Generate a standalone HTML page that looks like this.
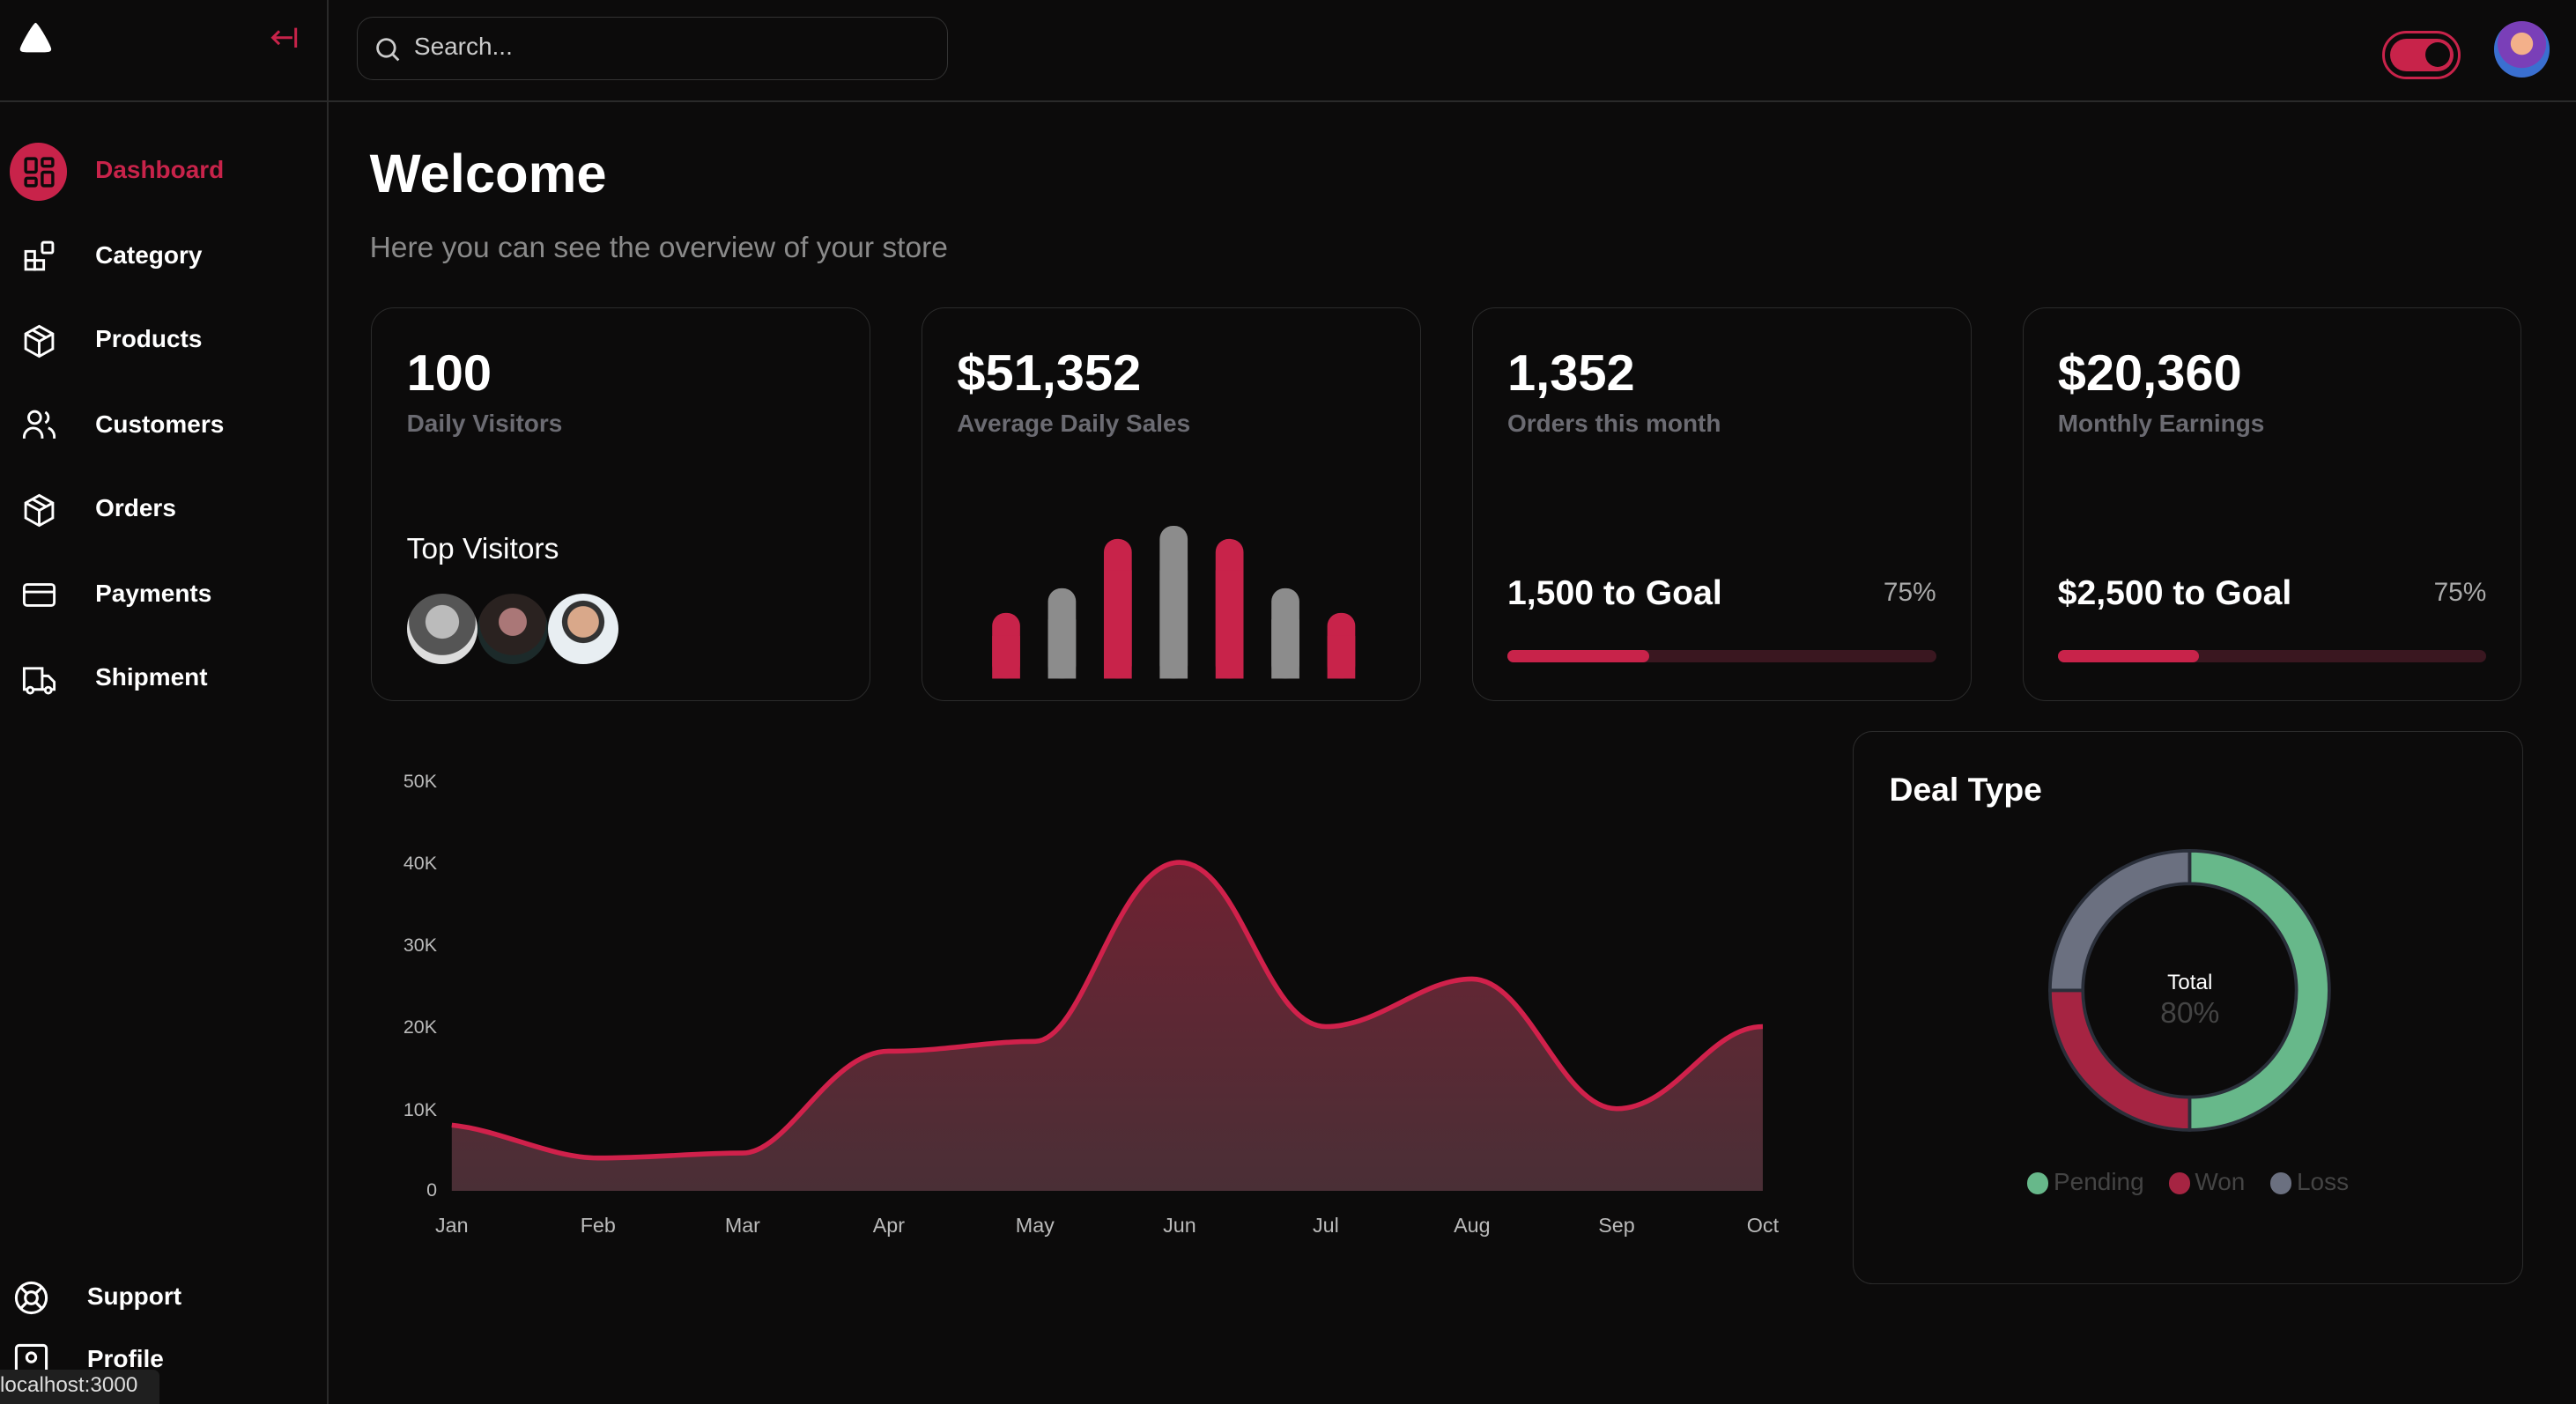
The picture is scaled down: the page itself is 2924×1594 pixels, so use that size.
<!DOCTYPE html>
<html><head><meta charset="utf-8"><style>
*{margin:0;padding:0;box-sizing:border-box}
html,body{background:#0c0b0b;overflow:hidden}
body{width:1568px;height:855px;zoom:1.86480;position:relative;font-family:"Liberation Sans",sans-serif;color:#fff}
.abs{position:absolute}
.nav{position:absolute;left:58px;font-weight:bold;font-size:15px;color:#fff}
.ico{position:absolute;left:13px;width:22px;height:22px}
.card{position:absolute;top:187px;width:304px;height:240px;border:1px solid #2b2b2b;border-radius:14px}
.big{position:absolute;left:21px;top:22px;font-size:31px;font-weight:bold}
.sub{position:absolute;left:21px;top:62px;font-size:15px;font-weight:bold;color:#6b6b72}
.goal{position:absolute;left:21px;top:162px;font-size:21px;font-weight:bold}
.pct{position:absolute;right:21px;top:164px;font-size:16px;color:#aaa}
.bar{position:absolute;left:21px;right:21px;top:208px;height:8px;border-radius:4px;background:#3a1720}
.bar i{display:block;width:33%;height:100%;background:#c8234a;border-radius:4px}
.yl{position:absolute;left:240px;width:26px;text-align:right;font-size:11.5px;color:#bbb}
.xl{position:absolute;top:739px;font-size:12.5px;color:#bbb;transform:translateX(-50%)}
</style></head><body>
<!-- sidebar -->
<div class="abs" style="left:199px;top:0;width:1px;height:855px;background:#2a2a2a"></div>
<div class="abs" style="left:0;top:61px;width:1568px;height:1px;background:#2a2a2a"></div>
<svg class="abs" style="left:10px;top:13px" width="23" height="20" viewBox="0 0 23 20"><path d="M11.5 1 C13 1 21 15 21 17 C21 19 19 19 11.5 19 C4 19 2 19 2 17 C2 15 10 1 11.5 1Z" fill="#fff"/></svg>
<svg class="abs" style="left:163px;top:14px" width="20" height="18" viewBox="0 0 20 18" fill="none" stroke="#c8234a" stroke-width="1.6"><path d="M15 9H3M7 5L3 9L7 13M17 3V15"/></svg>
<div class="abs" style="left:6px;top:87px;width:35px;height:35px;border-radius:50%;background:#c8234a"></div>
<svg class="ico" style="left:13px;top:94px" viewBox="0 0 24 24" fill="none" stroke="#0c0b0b" stroke-width="2"><rect x="3" y="3" width="7" height="9" rx="1"/><rect x="14" y="3" width="7" height="5" rx="1"/><rect x="14" y="12" width="7" height="9" rx="1"/><rect x="3" y="16" width="7" height="5" rx="1"/></svg>
<div class="nav" style="top:95px;color:#c8234a">Dashboard</div>
<svg class="ico" style="top:145px" viewBox="0 0 24 24" fill="none" stroke="#fff" stroke-width="1.7"><rect x="3" y="9" width="6" height="6"/><rect x="3" y="15" width="6" height="6"/><rect x="9" y="15" width="6" height="6"/><rect x="14" y="3" width="7" height="7" rx="1"/></svg>
<div class="nav" style="top:147px">Category</div>
<svg class="ico" style="top:197px" viewBox="0 0 24 24" fill="none" stroke="#fff" stroke-width="1.7"><path d="M12 2L21 7V17L12 22L3 17V7Z M3 7L12 12L21 7M12 12V22M7.5 4.5L16.5 9.5"/></svg>
<div class="nav" style="top:198px">Products</div>
<svg class="ico" style="top:248px" viewBox="0 0 24 24" fill="none" stroke="#fff" stroke-width="1.7"><circle cx="9" cy="7" r="4"/><path d="M2 21v-1a6 6 0 0 1 12 0v1M16 3.5a4 4 0 0 1 0 7M18 14a6 6 0 0 1 4 6v1"/></svg>
<div class="nav" style="top:250px">Customers</div>
<svg class="ico" style="top:300px" viewBox="0 0 24 24" fill="none" stroke="#fff" stroke-width="1.7"><path d="M12 2L21 7V17L12 22L3 17V7Z M3 7L12 12L21 7M12 12V22M7.5 4.5L16.5 9.5"/></svg>
<div class="nav" style="top:301px">Orders</div>
<svg class="ico" style="top:351px" viewBox="0 0 24 24" fill="none" stroke="#fff" stroke-width="1.7"><rect x="2" y="5" width="20" height="14" rx="2"/><path d="M2 10H22"/></svg>
<div class="nav" style="top:353px">Payments</div>
<svg class="ico" style="top:403px" viewBox="0 0 24 24" fill="none" stroke="#fff" stroke-width="1.7"><path d="M2 4H14V18H2Z M14 9H18L22 13V18H14"/><circle cx="6" cy="18.5" r="2" fill="#0c0b0b"/><circle cx="18" cy="18.5" r="2" fill="#0c0b0b"/></svg>
<div class="nav" style="top:404px">Shipment</div>
<svg class="ico" style="left:8px;top:779px" viewBox="0 0 24 24" fill="none" stroke="#fff" stroke-width="1.8"><circle cx="12" cy="12" r="10"/><circle cx="12" cy="12" r="4"/><path d="M5 5L9 9M15 15L19 19M19 5L15 9M9 15L5 19"/></svg>
<div class="nav" style="left:53px;top:781px">Support</div>
<svg class="ico" style="left:8px;top:817px" viewBox="0 0 24 24" fill="none" stroke="#fff" stroke-width="1.8"><rect x="2" y="2" width="20" height="20" rx="2"/><circle cx="12" cy="10" r="3"/></svg>
<div class="nav" style="left:53px;top:819px">Profile</div>
<div class="abs" style="left:0;top:834px;width:97px;height:21px;background:#1f1f1f;border-top-right-radius:4px;font-size:13px;color:#ddd;padding:2px 0 0 0">localhost:3000</div>
<!-- top bar -->
<div class="abs" style="left:217px;top:10px;width:360px;height:39px;border:1px solid #333;border-radius:10px"></div>
<svg class="abs" style="left:227px;top:21px" width="18" height="18" viewBox="0 0 24 24" fill="none" stroke="#ccc" stroke-width="2"><circle cx="11" cy="11" r="7"/><path d="M16 16L21 21"/></svg>
<div class="abs" style="left:252px;top:20px;font-size:15px;color:#ccc">Search...</div>
<div class="abs" style="left:1450px;top:19px;width:48px;height:29px;border:2px solid #c8234a;border-radius:15px;padding:3px"><div style="width:100%;height:100%;background:#c8234a;border-radius:12px;position:relative"><div style="position:absolute;right:2px;top:2px;width:15px;height:15px;border-radius:50%;background:#0c0b0b"></div></div></div>
<div class="abs" style="left:1518px;top:13px;width:34px;height:34px;border-radius:50%;background:radial-gradient(circle at 50% 40%,#f3b08a 0 25%,#7a3fb8 26% 55%,#3a6fd0 56%)"></div>
<!-- header -->
<div class="abs" style="left:225px;top:87px;font-size:33px;font-weight:bold">Welcome</div>
<div class="abs" style="left:225px;top:141px;font-size:18px;color:#8a8a8a">Here you can see the overview of your store</div>
<!-- cards -->
<div class="card" style="left:226px"><div class="big">100</div><div class="sub">Daily Visitors</div>
<div class="abs" style="left:21px;top:137px;font-size:18px">Top Visitors</div>
<div class="abs" style="left:21px;top:174px;width:43px;height:43px;border-radius:50%;background:radial-gradient(circle at 50% 40%,#bbb 0 30%,#555 31% 60%,#ddd 61%)"></div>
<div class="abs" style="left:64px;top:174px;width:43px;height:43px;border-radius:50%;background:radial-gradient(circle at 50% 40%,#a77 0 25%,#2a2220 26% 60%,#1c2a2a 61%)"></div>
<div class="abs" style="left:107px;top:174px;width:43px;height:43px;border-radius:50%;background:radial-gradient(circle at 50% 40%,#d9a88a 0 28%,#333 29% 38%,#e8eef2 39%)"></div>
</div>
<div class="card" style="left:561px"><div class="big">$51,352</div><div class="sub">Average Daily Sales</div></div>
<svg class="abs" style="left:561px;top:187px" width="304" height="240">
<g><rect x="43" y="186" width="17" height="40" rx="8" fill="#c8234a"/><rect x="43" y="200" width="17" height="26" fill="#c8234a"/>
<rect x="77" y="171" width="17" height="55" rx="8" fill="#8c8c8c"/><rect x="77" y="190" width="17" height="36" fill="#8c8c8c"/>
<rect x="111" y="141" width="17" height="85" rx="8" fill="#c8234a"/><rect x="111" y="160" width="17" height="66" fill="#c8234a"/>
<rect x="145" y="133" width="17" height="93" rx="8" fill="#8c8c8c"/><rect x="145" y="160" width="17" height="66" fill="#8c8c8c"/>
<rect x="179" y="141" width="17" height="85" rx="8" fill="#c8234a"/><rect x="179" y="160" width="17" height="66" fill="#c8234a"/>
<rect x="213" y="171" width="17" height="55" rx="8" fill="#8c8c8c"/><rect x="213" y="190" width="17" height="36" fill="#8c8c8c"/>
<rect x="247" y="186" width="17" height="40" rx="8" fill="#c8234a"/><rect x="247" y="200" width="17" height="26" fill="#c8234a"/></g></svg>
<div class="card" style="left:896px"><div class="big">1,352</div><div class="sub">Orders this month</div><div class="goal">1,500 to Goal</div><div class="pct">75%</div><div class="bar"><i></i></div></div>
<div class="card" style="left:1231px"><div class="big">$20,360</div><div class="sub">Monthly Earnings</div><div class="goal">$2,500 to Goal</div><div class="pct">75%</div><div class="bar"><i></i></div></div>
<!-- area chart -->
<div class="yl" style="top:469px">50K</div><div class="yl" style="top:519px">40K</div><div class="yl" style="top:569px">30K</div><div class="yl" style="top:619px">20K</div><div class="yl" style="top:669px">10K</div><div class="yl" style="top:718px">0</div>
<svg class="abs" style="left:0;top:0" width="1568" height="855">
<defs><linearGradient id="g" x1="0" y1="0" x2="0" y2="1"><stop offset="0" stop-color="#6e2232"/><stop offset="1" stop-color="#4a2f36"/></linearGradient></defs>
<path d="M275,685 C305,688 335,705 364,705 C395,705 425,702 452,702 C480,702 505,640 541,640 C575,640 600,634 630,634 C660,634 680,525 718,525 C755,525 770,625 807,625 C840,625 865,596 896,596 C930,596 950,675 984,675 C1020,675 1040,625 1073,625 L1073,725 L275,725Z" fill="url(#g)"/>
<path d="M275,685 C305,688 335,705 364,705 C395,705 425,702 452,702 C480,702 505,640 541,640 C575,640 600,634 630,634 C660,634 680,525 718,525 C755,525 770,625 807,625 C840,625 865,596 896,596 C930,596 950,675 984,675 C1020,675 1040,625 1073,625" fill="none" stroke="#d0214b" stroke-width="3"/>
</svg>
<div class="xl" style="left:275px">Jan</div><div class="xl" style="left:364px">Feb</div><div class="xl" style="left:452px">Mar</div><div class="xl" style="left:541px">Apr</div><div class="xl" style="left:630px">May</div><div class="xl" style="left:718px">Jun</div><div class="xl" style="left:807px">Jul</div><div class="xl" style="left:896px">Aug</div><div class="xl" style="left:984px">Sep</div><div class="xl" style="left:1073px">Oct</div>
<!-- deal type -->
<div class="abs" style="left:1128px;top:445px;width:408px;height:337px;border:1px solid #2b2b2b;border-radius:12px"></div>
<div class="abs" style="left:1150px;top:469px;font-size:20px;font-weight:bold">Deal Type</div>
<svg class="abs" style="left:1240px;top:510px" width="186" height="186" viewBox="-93 -93 186 186">
<path d="M0,-85 A85,85 0 0 1 0,85 L0,65 A65,65 0 0 0 0,-65Z" fill="#67b88a" stroke="#2a2f3a" stroke-width="2"/>
<path d="M0,85 A85,85 0 0 1 -85,0 L-65,0 A65,65 0 0 0 0,65Z" fill="#a62442" stroke="#2a2f3a" stroke-width="2"/>
<path d="M-85,0 A85,85 0 0 1 0,-85 L0,-65 A65,65 0 0 0 -65,0Z" fill="#6b7080" stroke="#2a2f3a" stroke-width="2"/>
</svg>
<div class="abs" style="left:1293px;top:591px;width:80px;text-align:center;font-size:13px">Total</div>
<div class="abs" style="left:1293px;top:607px;width:80px;text-align:center;font-size:18px;color:#444">80%</div>
<div class="abs" style="left:1234px;top:714px;width:13px;height:13px;border-radius:50%;background:#67b88a"></div>
<div class="abs" style="left:1250px;top:711px;font-size:15px;color:#444">Pending</div>
<div class="abs" style="left:1320px;top:714px;width:13px;height:13px;border-radius:50%;background:#a62442"></div>
<div class="abs" style="left:1336px;top:711px;font-size:15px;color:#444">Won</div>
<div class="abs" style="left:1382px;top:714px;width:13px;height:13px;border-radius:50%;background:#6b7080"></div>
<div class="abs" style="left:1398px;top:711px;font-size:15px;color:#444">Loss</div>
</body></html>
